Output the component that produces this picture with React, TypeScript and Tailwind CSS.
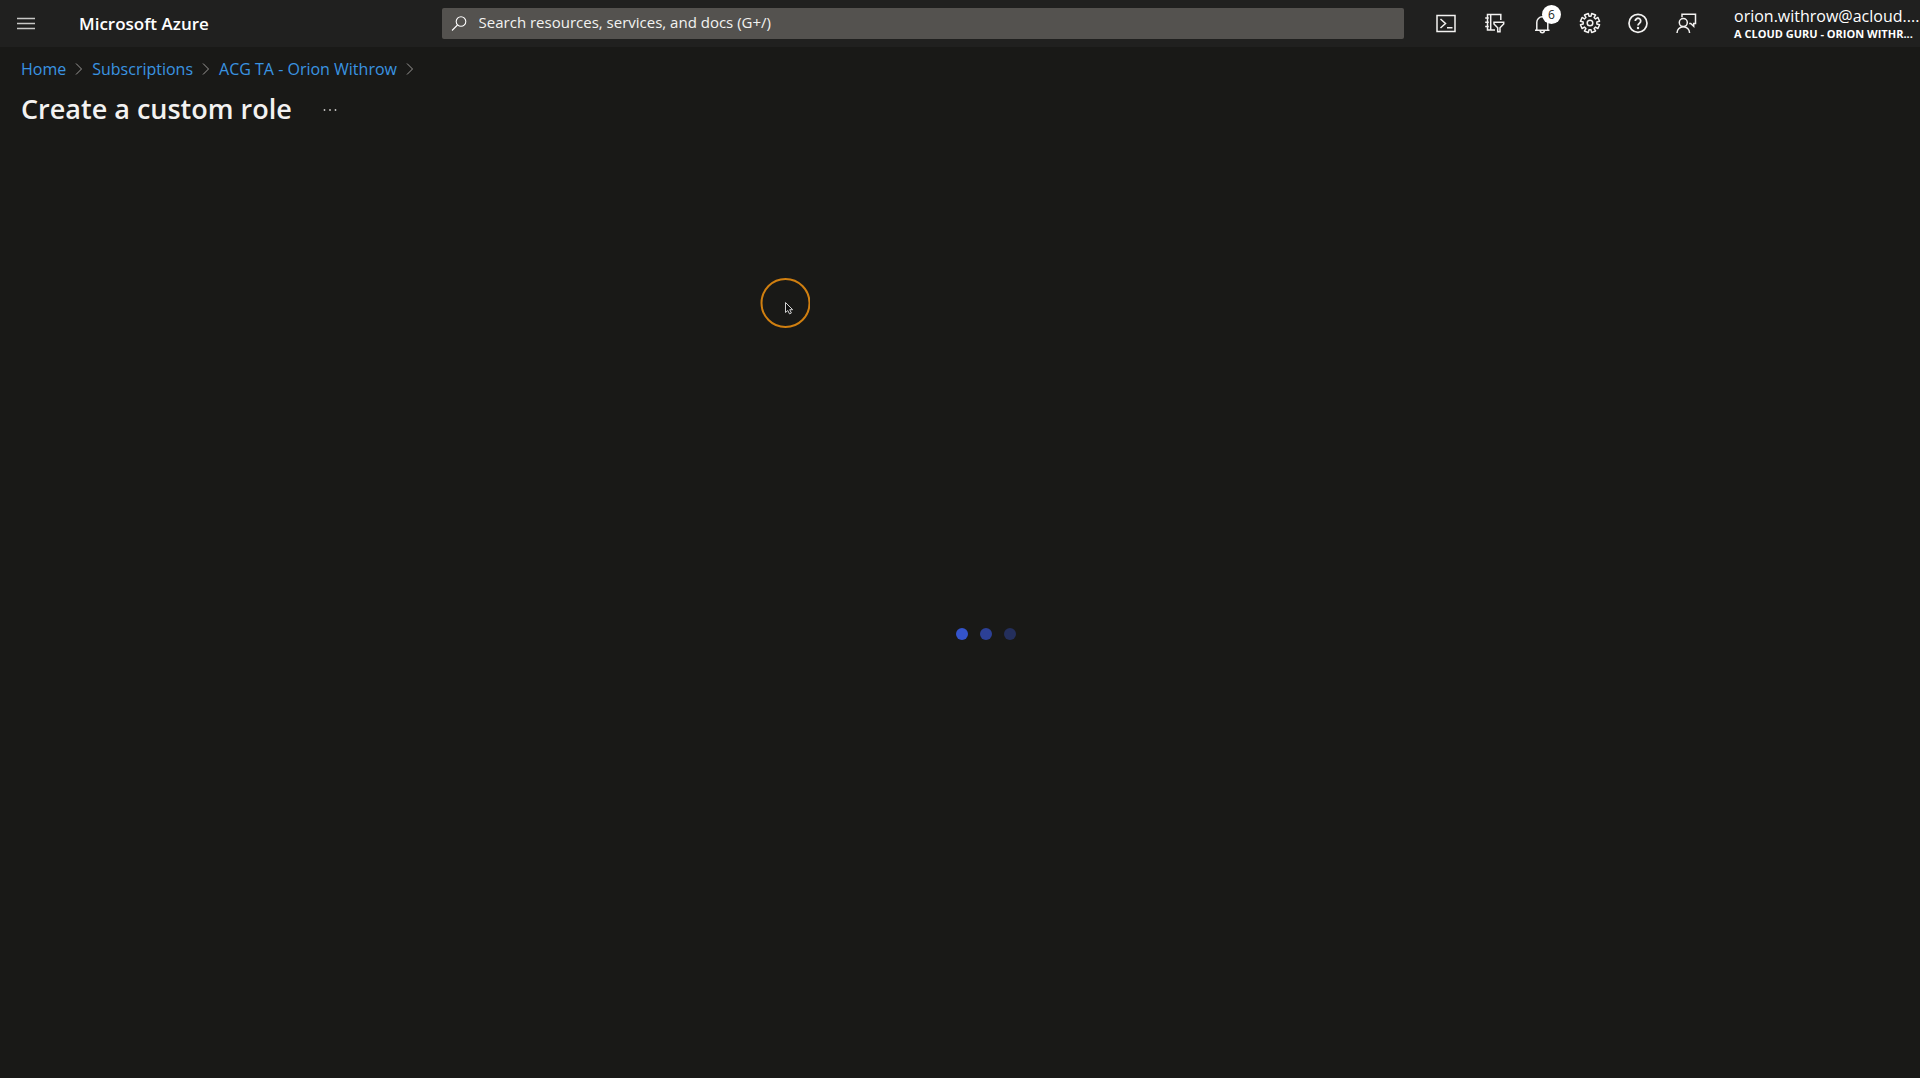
import React from 'react';

const gearPoints = (() => {
  const pts: string[] = [];
  for (let i = 0; i < 8; i++) {
    const base = (i * 45 + 22.5) * (Math.PI / 180);
    const steps: [number, number][] = [[-0.24, 6.9], [-0.22, 9.7], [0.22, 9.7], [0.24, 6.9]];
    for (const [da, r] of steps) {
      pts.push(`${(12 + r * Math.cos(base + da)).toFixed(2)},${(12 + r * Math.sin(base + da)).toFixed(2)}`);
    }
  }
  return pts.join(' ');
})();

function Icon({ children }: { children: React.ReactNode }) {
  return (
    <svg className="size-6" viewBox="0 0 24 24" fill="none" stroke="currentColor" strokeWidth="1.5" aria-hidden="true">
      {children}
    </svg>
  );
}

const actions = [
  {
    label: 'Cloud Shell',
    icon: (
      <Icon>
        <rect x="3" y="4.5" width="18" height="16" />
        <path d="M6.5 8l5 4.5-5 4.5M13 16.8h5.5" />
      </Icon>
    ),
  },
  {
    label: 'Directories and subscriptions',
    icon: (
      <Icon>
        <path d="M18.8 9V3.5H5.5V19H13M8.7 3.5V19M3.2 7h3.6M3.2 11.3h3.6M3.2 15.6h3.6" />
        <path d="M12 11.3h9.7v1.6L18 16.7v4.1h-2.3v-4.1L12 12.9z" />
      </Icon>
    ),
  },
  {
    label: 'Notifications',
    badge: '6',
    icon: (
      <Icon>
        <path d="M5 19.3h14.5M6.8 19.3v-8a5.5 5.5 0 0 1 11 0v8M10.2 19.6a2.1 2.1 0 0 0 4.2 0" />
      </Icon>
    ),
  },
  {
    label: 'Settings',
    icon: (
      <Icon>
        <polygon points={gearPoints} strokeLinejoin="round" />
        <circle cx="12" cy="12" r="2.8" />
      </Icon>
    ),
  },
  {
    label: 'Help',
    icon: (
      <Icon>
        <circle cx="12" cy="12.3" r="9" strokeWidth="1.7" />
        <path d="M9.3 10a2.7 2.7 0 1 1 4.2 2.2c-1 .7-1.5 1.1-1.5 2.4" strokeWidth="1.8" />
        <circle cx="12" cy="17" r="1.2" fill="currentColor" stroke="none" />
      </Icon>
    ),
  },
  {
    label: 'Feedback',
    icon: (
      <Icon>
        <path d="M8 6.2V3.2h13.5v9.3h-1.8v2.8l-3-2.8h-1.5" />
        <circle cx="9.3" cy="11.6" r="4" />
        <path d="M3 22a6.3 6.3 0 0 1 12.6 0" />
      </Icon>
    ),
  },
];

const crumbs = ['Home', 'Subscriptions', 'ACG TA - Orion Withrow'];

export default function App() {
  return (
    <div className="relative flex min-h-screen flex-col overflow-hidden bg-[#191917] font-['Open_Sans','Noto_Sans',sans-serif] text-white">
      <header className="flex h-[47px] items-center bg-[#20201f]">
        <div className="flex w-[23%] items-center">
          <button type="button" aria-label="Show portal menu" className="flex h-[47px] w-[51px] items-center justify-center text-[#c8c8c6]">
            <svg className="h-4 w-[18px]" viewBox="0 0 18 16" stroke="currentColor" strokeWidth="1.5" aria-hidden="true">
              <path d="M0 2.5h18M0 7.5h18M0 12.5h18" />
            </svg>
          </button>
          <a href="#" className="ml-7 text-[17px] font-semibold">Microsoft Azure</a>
        </div>
        <label className="flex h-[31px] flex-1 items-center gap-3 rounded-xs bg-[#54524f] pl-[9px]">
          <svg className="size-4" viewBox="0 0 16 16" fill="none" stroke="currentColor" strokeWidth="1.1" aria-hidden="true">
            <circle cx="10" cy="5.5" r="4.8" />
            <path d="M6.5 9L1 14.5" />
          </svg>
          <input
            type="text"
            aria-label="Search resources, services, and docs"
            placeholder="Search resources, services, and docs (G+/)"
            className="min-w-0 flex-1 bg-transparent pb-0.5 text-[15px] outline-none placeholder:text-[#f3f2f1]"
          />
        </label>
        <div className="ml-[18px] flex text-[#f3f2f1]">
          {actions.map((a) => (
            <button key={a.label} type="button" aria-label={a.label} className="relative flex h-[47px] w-12 items-center justify-center pb-0.5">
              {a.icon}
              {a.badge && (
                <span className="absolute top-[5px] right-[5px] flex size-[19px] items-center justify-center rounded-full bg-white text-xs text-[#201f1e]">
                  {a.badge}
                </span>
              )}
            </button>
          ))}
        </div>
        <button type="button" className="ml-6 w-[186px] pt-px text-left whitespace-nowrap">
          <span className="block text-base leading-5">orion.withrow@acloud....</span>
          <span className="block text-[11px] leading-4 font-bold">A CLOUD GURU - ORION WITHR...</span>
        </button>
      </header>

      <nav aria-label="Breadcrumb" className="mt-[11px] pl-[21px]">
        <ol className="flex items-center">
          {crumbs.map((c) => (
            <li key={c} className="flex items-center text-base leading-[22px]">
              <a href="#" className="text-[#3a94e2]">{c}</a>
              <svg className="mx-[9px] h-3 w-2" viewBox="0 0 8 12" fill="none" stroke="#9a9896" aria-hidden="true">
                <path d="M1 .5L6.5 6 1 11.5" />
              </svg>
            </li>
          ))}
        </ol>
      </nav>

      <div className="mt-[11px] flex items-center pl-[21px]">
        <h1 className="text-[27px] leading-9 font-semibold text-[#f3f2f1]">Create a custom role</h1>
        <button type="button" aria-label="More actions" className="mt-0.5 ml-[31px] text-[#c8c6c4]">
          <svg className="h-1 w-[14px]" viewBox="0 0 14 4" fill="currentColor" aria-hidden="true">
            <circle cx="1.5" cy="2" r="0.9" />
            <circle cx="7" cy="2" r="0.9" />
            <circle cx="12.5" cy="2" r="0.9" />
          </svg>
        </button>
      </div>

      <main className="flex flex-1 justify-center pl-[52px]">
        <div role="status" aria-label="Loading" className="mt-[501px] flex gap-3">
          <span className="size-3 rounded-full bg-[#3454cb]" />
          <span className="size-3 rounded-full bg-[#2c4096]" />
          <span className="size-3 rounded-full bg-[#242f5c]" />
        </div>
      </main>

      <svg className="absolute top-[278px] left-[760px] size-[50px]" viewBox="0 0 50 50" fill="none" aria-hidden="true">
        <circle cx="25.5" cy="25" r="24" stroke="#d07f10" strokeWidth="2" />
        <path d="M25.5 24.5v10l2.3-2 1.7 3.4 1.9-.9-1.7-3.3h3z" fill="#111" stroke="#d0d0d0" />
      </svg>
    </div>
  );
}
